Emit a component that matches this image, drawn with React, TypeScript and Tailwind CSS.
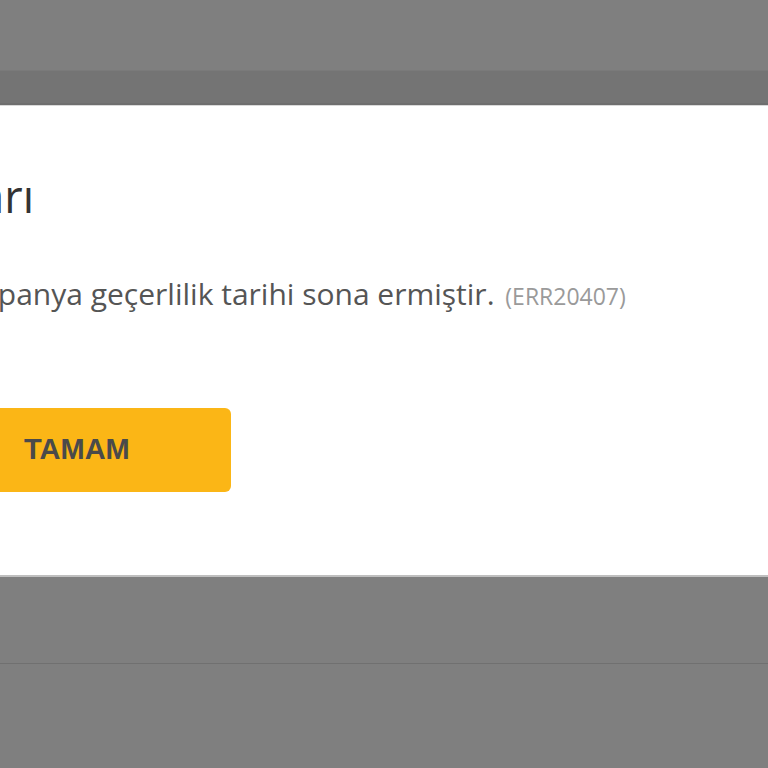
import React from 'react';

const font = { fontFamily: '"Open Sans", "Noto Sans", sans-serif' };

export default function App() {
  return (
    <div className="w-[768px] h-[768px] overflow-hidden bg-[#7f7f7f] flex flex-col">
      {/* header strip behind the overlay */}
      <div className="h-[70px] shrink-0" />
      <div className="h-[35px] shrink-0 bg-[#747474] border-t border-[#7a7a7a] border-b-2 border-b-[#6e6e6e]" />

      {/* modal */}
      <div
        className="h-[472px] shrink-0 bg-white border-t border-[#d9d9d9] border-b-2 border-b-[#bfbfbf] flex flex-col -ml-[65px]"
        style={font}
      >
        <h2 className="mt-[62px] -ml-[11px] text-[45px] leading-[56px] text-[#333333] font-normal">Uyarı</h2>
        <p className="mt-[50px] text-[30px] leading-[40px] text-[#555555] whitespace-nowrap">
          Kampanya geçerlilik tarihi sona ermiştir.{' '}
          <span className="ml-[3px] text-[23px] text-[#9a9a9a]">(ERR20407)</span>
        </p>
        <button
          className="mt-[92px] w-[296px] h-[84px] rounded-[6px] bg-[#fbb616] text-[#4a4a4a] text-[29px] font-bold text-left pl-[89px]"
          style={{ fontFamily: '"Liberation Sans", Arial, sans-serif' }}
        >
          TAMAM
        </button>
      </div>

      {/* rest of page */}
      <div className="h-[87px] shrink-0 border-b border-[#707070]" />
      <div className="flex-1" />
    </div>
  );
}
